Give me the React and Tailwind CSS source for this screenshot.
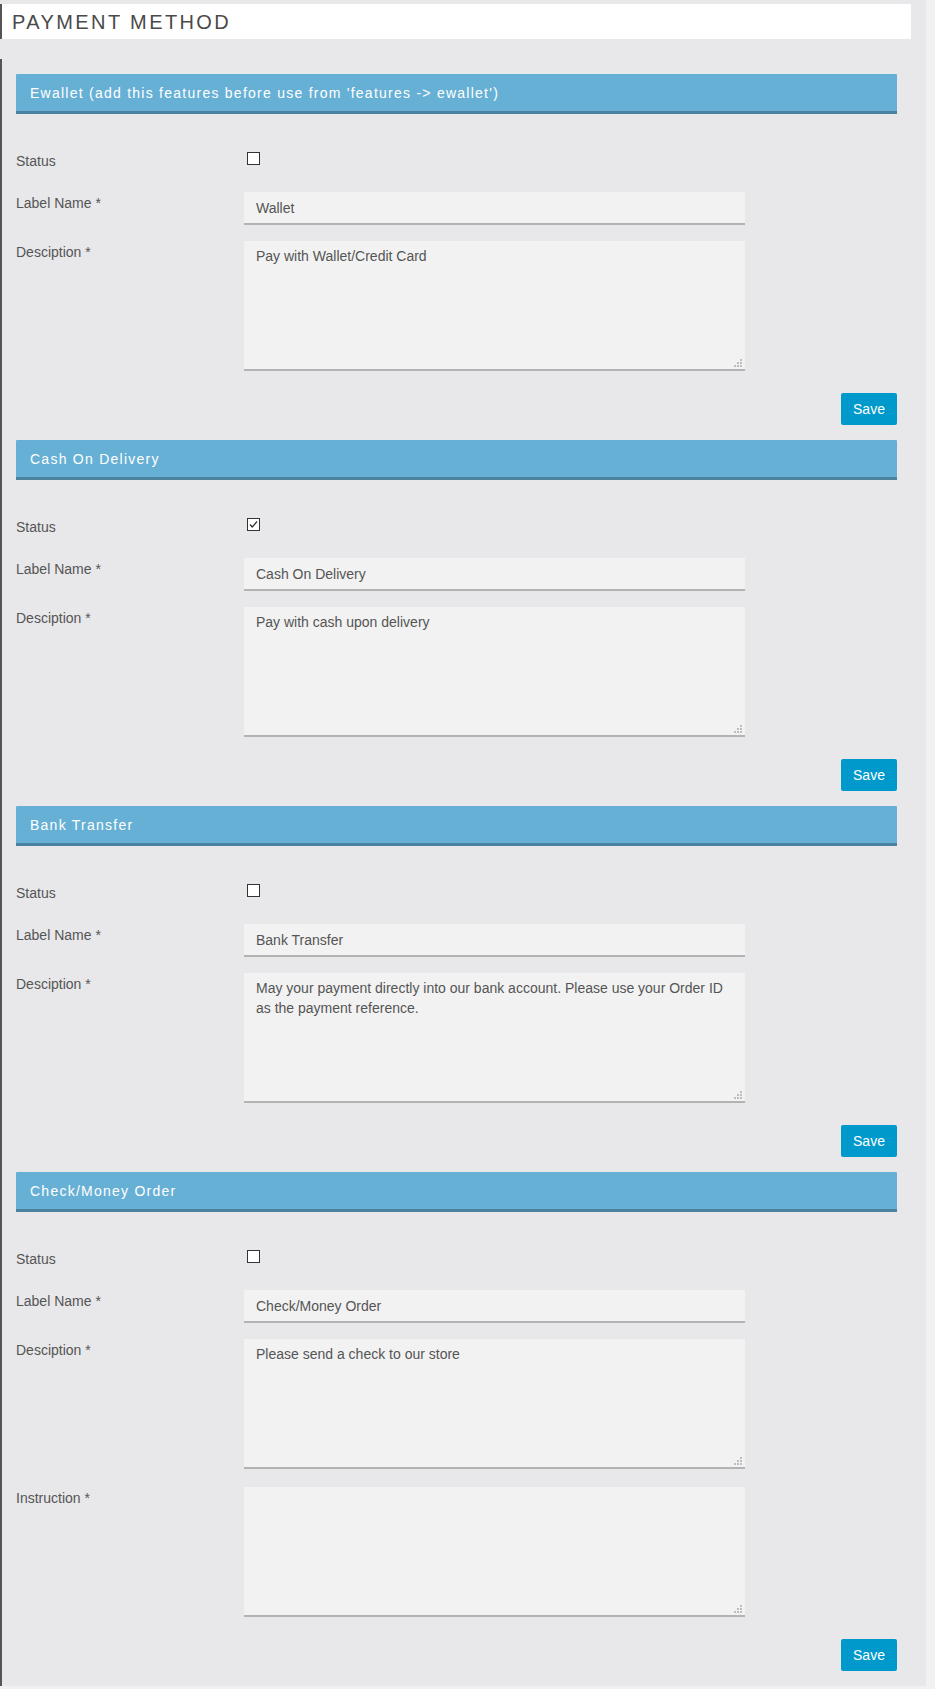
import React from "react";

const sections = [
  {
    title: "Ewallet (add this features before use from 'features -> ewallet')",
    checked: false,
    label: "Wallet",
    desc: "Pay with Wallet/Credit Card",
  },
  {
    title: "Cash On Delivery",
    checked: true,
    label: "Cash On Delivery",
    desc: "Pay with cash upon delivery",
  },
  {
    title: "Bank Transfer",
    checked: false,
    label: "Bank Transfer",
    desc: "May your payment directly into our bank account. Please use your Order ID as the payment reference.",
  },
  {
    title: "Check/Money Order",
    checked: false,
    label: "Check/Money Order",
    desc: "Please send a check to our store",
    instruction: true,
  },
];

function Grip() {
  return (
    <svg
      className="absolute right-[3px] bottom-[4px]"
      width="8"
      height="8"
      viewBox="0 0 8 8"
    >
      <rect x="6" y="0" width="2" height="2" fill="#bdbdbd" />
      <rect x="3" y="3" width="2" height="2" fill="#bdbdbd" />
      <rect x="6" y="3" width="2" height="2" fill="#bdbdbd" />
      <rect x="0" y="6" width="2" height="2" fill="#bdbdbd" />
      <rect x="3" y="6" width="2" height="2" fill="#bdbdbd" />
      <rect x="6" y="6" width="2" height="2" fill="#bdbdbd" />
    </svg>
  );
}

function TextArea({ value }) {
  return (
    <div className="relative w-[501px] h-[130px]">
      <textarea
        defaultValue={value}
        className="block w-full h-full resize-none bg-[#f2f2f2] border-0 border-b-2 border-[#b3b3b3] px-[12px] pt-[5px] text-[14px] leading-[20px] text-[#555] outline-none overflow-hidden"
        style={{ fontFamily: '"Liberation Sans", Arial, sans-serif' }}
      />
      <Grip />
    </div>
  );
}

function Checkbox({ checked }) {
  return (
    <span className="mt-[1px] block w-[13px] h-[13px] border border-[#333] bg-white relative">
      {checked && (
        <svg
          className="absolute left-0 top-0"
          width="11"
          height="11"
          viewBox="0 0 11 11"
        >
          <polyline
            points="2,5.5 4.2,8 9,2.5"
            fill="none"
            stroke="#333"
            strokeWidth="1.3"
          />
        </svg>
      )}
    </span>
  );
}

function Label({ children }) {
  return (
    <div className="w-[228px] shrink-0 pt-[1px] text-[14px] leading-[20px] text-[#555]">
      {children}
    </div>
  );
}

function Section({ s }) {
  return (
    <div className="flex flex-col">
      <div className="h-[40px] bg-[#67b0d5] border-b-[3px] border-[#4a82a0] pl-[14px] pt-[9px] text-white text-[14px] leading-[20px] tracking-[1.25px] rounded-t-[1px]">
        {s.title}
      </div>
      <div className="mt-[37px] flex items-start h-[20px]">
        <div className="w-[231px] shrink-0 text-[14px] leading-[20px] text-[#555]">
          Status
        </div>
        <Checkbox checked={s.checked} />
      </div>
      <div className="mt-[21px] flex items-start">
        <Label>Label Name *</Label>
        <input
          defaultValue={s.label}
          className="block w-[501px] h-[33px] bg-[#f2f2f2] border-0 border-b-2 border-[#b3b3b3] px-[12px] text-[14px] leading-[20px] text-[#555] outline-none"
          style={{ fontFamily: '"Liberation Sans", Arial, sans-serif' }}
        />
      </div>
      <div className="mt-[16px] flex items-start">
        <Label>Desciption *</Label>
        <TextArea value={s.desc} />
      </div>
      {s.instruction && (
        <div className="mt-[18px] flex items-start">
          <Label>Instruction *</Label>
          <TextArea value="" />
        </div>
      )}
      <div className="mt-[22px] flex justify-end">
        <button className="w-[56px] h-[32px] bg-[#0099cc] text-white text-[14px] leading-[20px] rounded-[2px]">
          Save
        </button>
      </div>
    </div>
  );
}

export default function App() {
  return (
    <div
      className="min-h-[1689px] w-[935px] bg-[#f1f1f1]"
      style={{ fontFamily: '"Liberation Sans", Arial, sans-serif' }}
    >
      <div className="w-[926px] bg-[#e8e8ea] pt-[4px]">
        <div className="w-[911px] h-[35px] bg-white border-l-2 border-[#555] pl-[10px] pt-[1px] text-[20px] leading-[35px] tracking-[2.4px] text-[#4a4a4a]">
          PAYMENT METHOD
        </div>
        <div className="mt-[20px] border-l-2 border-[#555] pl-[14px] pr-[29px] pt-[15px] pb-[15px] flex flex-col gap-[15px]">
          {sections.map((s, i) => (
            <Section key={i} s={s} />
          ))}
        </div>
      </div>
    </div>
  );
}
